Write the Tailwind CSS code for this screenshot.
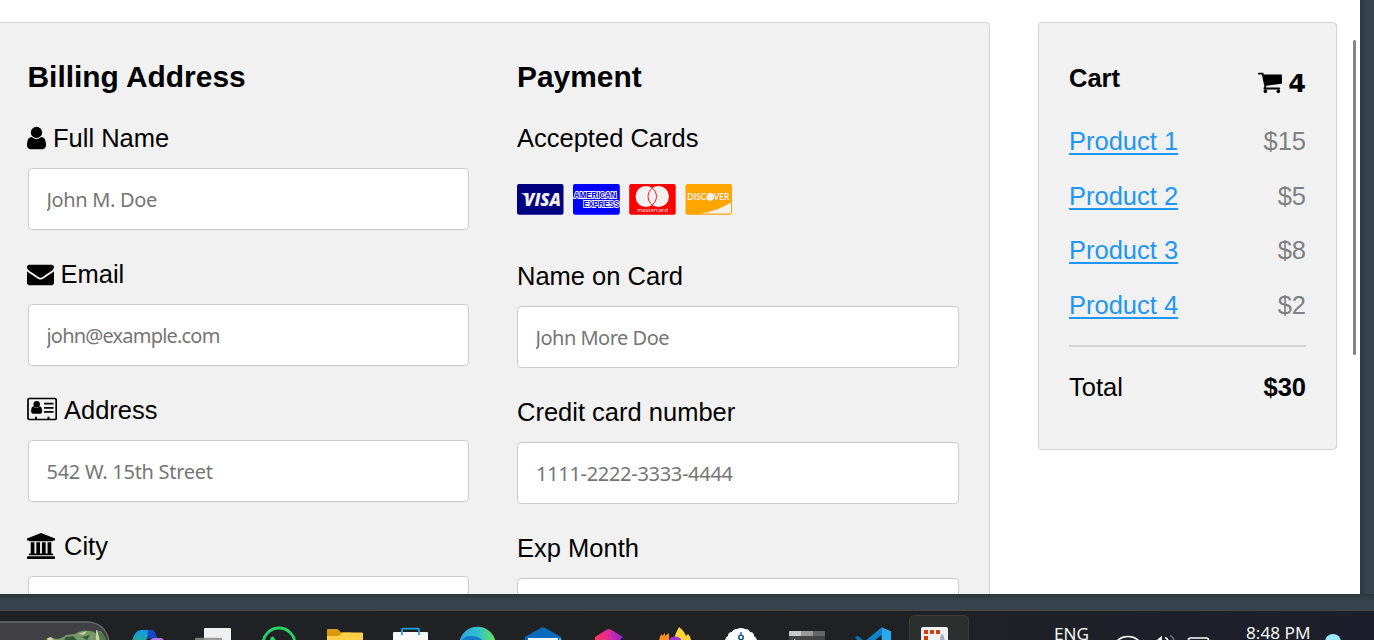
<!DOCTYPE html>
<html lang="en">
<head>
<meta charset="utf-8">
<title>Checkout</title>
<script src="https://cdn.jsdelivr.net/npm/@tailwindcss/browser@4"></script>
</head>
<body class="w-[1374px] h-[640px] overflow-hidden flex flex-col bg-[#37444d] font-['Liberation_Sans',Arial,sans-serif] text-[25.5px] leading-[29px] text-black">

<div class="flex h-[594px] w-full shrink-0">
  <!-- Browser page -->
  <main class="w-[1360px] h-[594px] overflow-hidden bg-white flex items-start pt-[22px]">
    <form class="-ml-1 w-[994px] h-[640px] shrink-0 bg-[#f1f1f1] border border-[#d3d3d3] rounded-[4px] pt-[37px] pl-[31px] pr-[30px] flex gap-12">
      <section class="w-[441px]">
        <h3 class="-ml-[0.5px] font-bold text-[29.9px] leading-[34px] mb-[30px]">Billing Address</h3>
        <label class="flex h-[29px] mb-[15px] whitespace-pre"><svg class="w-[19px] h-[26px] mt-px -ml-[1px] mr-[7px]" viewBox="256 0 1280 1792" preserveAspectRatio="none"><path d="M1536 1399q0 109-62.5 187t-150.5 78h-854q-88 0-150.5-78t-62.5-187q0-85 8.5-160.5t31.5-152 58.5-131 94-89 134.5-34.5q131 128 313 128t313-128q76 0 134.5 34.5t94 89 58.5 131 31.5 152 8.5 160.5zm-256-887q0 159-112.5 271.5t-271.5 112.5-271.5-112.5-112.5-271.5 112.5-271.5 271.5-112.5 271.5 112.5 112.5 271.5z"/></svg>Full Name</label>
        <input class="block w-full h-[62px] mb-[30px] bg-white border border-[#cccccc] rounded-[4px] px-[17.5px] font-['Noto_Sans',sans-serif] text-[20px] tracking-[-0.35px] placeholder:text-[#757575]" placeholder="John M. Doe">
        <label class="flex h-[29px] mb-[15px]"><svg class="w-[27px] h-[26px] mt-[1px] -ml-[1px] mr-[6.5px]" viewBox="0 0 1792 1792" preserveAspectRatio="none"><path d="M1792 710v794q0 66-47 113t-113 47h-1472q-66 0-113-47t-47-113v-794q44 49 101 87 362 246 497 345 57 42 92.5 65.5t94.5 48 110 24.5h2q51 0 110-24.5t94.5-48 92.5-65.5q170-123 498-345 57-39 100-87zm0-294q0 79-49 151t-122 123q-376 261-468 325-10 7-42.5 31t-54 38.500-52 32.500-57.500 27-50 9h-2q-23 0-50-9t-57.500-27-52-32.500-54-38.500-42.500-31q-91-64-262-182.500t-205-142.500q-62-42-117-115.500t-55-136.500q0-78 41.500-130t118.500-52h1472q65 0 112.500 47t47.500 113z"/></svg>Email</label>
        <input class="block w-full h-[62px] mb-[30px] bg-white border border-[#cccccc] rounded-[4px] px-[17.5px] font-['Noto_Sans',sans-serif] text-[20px] tracking-[-0.8px] placeholder:text-[#757575]" placeholder="john@example.com">
        <label class="flex h-[29px] mb-[15px]"><svg class="w-[30px] h-[24px] mt-[1px] -ml-[1px] mr-[7px]" viewBox="0 0 30 24"><rect x="1" y="1.500" width="28.200" height="21" rx="1.300" fill="none" stroke="#000" stroke-width="1.700"/><circle cx="9.700" cy="7.300" r="3.200"/><path d="M6.400 9.300q3.200 3 6.400 0 2.400.8 2.400 5 0 2.400-1.600 2.400H5.700q-1.600 0-1.600-2.400 0-4.200 2.300-5zM17 5.800h9.500v1.800H17zM17 9.900h9.500v1.800H17zM17 13.900h9.500v1.800H17zM8 19.700h2V22H8zM20.500 19.700h2V22h-2z"/></svg>Address</label>
        <input class="block w-full h-[62px] mb-[30px] bg-white border border-[#cccccc] rounded-[4px] px-[17.5px] font-['Noto_Sans',sans-serif] text-[20px] tracking-[-0.27px] placeholder:text-[#757575]" placeholder="542 W. 15th Street">
        <label class="flex h-[29px] mb-[15px]"><svg class="w-[28px] h-[26px] mt-[1px] -ml-[1px] mr-[9px]" viewBox="0 0 1920 1792" preserveAspectRatio="none"><path d="M960 0l960 384v128h-128q0 26-20.500 45t-48.500 19H197q-28 0-48.500-19T128 512H0V384zM256 640h256v768h128V640h256v768h128V640h256v768h128V640h256v768h59q28 0 48.500 19t20.500 45v64H128v-64q0-26 20.500-45t48.500-19h59zm1595 960q28 0 48.500 19t20.500 45v128H0v-128q0-26 20.500-45t48.500-19z"/></svg>City</label>
        <input class="block w-full h-[62px] bg-white border border-[#cccccc] rounded-[4px]">
      </section>
      <section class="w-[442px]">
        <h3 class="font-bold text-[29.9px] leading-[34px] mb-[30px]">Payment</h3>
        <label class="block h-[29px]">Accepted Cards</label>
        <div class="flex gap-[9px] h-[109px] pt-[31px]">
          <svg class="w-[47px] h-[32px] shrink-0" viewBox="0 0 47 32"><rect width="46.500" height="30.800" rx="2" fill="#000080"/><path d="M4 9.300h4.200q1.400.2 1.700 1.800l1.100 5q-2-4.800-7-6.800z" fill="#f1f1f1"/><text x="7" y="22" font-family="Open Sans" font-weight="800" font-style="italic" font-size="17.500" textLength="37" lengthAdjust="spacingAndGlyphs" fill="#f1f1f1">VISA</text></svg>
          <svg class="w-[47px] h-[32px] shrink-0" viewBox="0 0 47 32"><rect width="46.800" height="30.800" rx="2" fill="#0000ff"/><g font-family="Liberation Sans" font-weight="bold" font-size="8.400" fill="#0000ff" stroke="#f1f1f1" stroke-width="1.900" paint-order="stroke"><text x="1" y="13.600" textLength="42.500" lengthAdjust="spacingAndGlyphs">AMERICAN</text><text x="10.500" y="23" textLength="35.500" lengthAdjust="spacingAndGlyphs">EXPRESS</text></g></svg>
          <svg class="w-[47px] h-[32px] shrink-0" viewBox="0 0 47 32"><rect x=".2" width="46.500" height="30.800" rx="2" fill="#ff0000"/><circle cx="17" cy="12.500" r="10.500" fill="#f1f1f1"/><circle cx="29.500" cy="12.500" r="10.500" fill="#f1f1f1"/><path d="M23.250 4.100a10.500 10.500 0 0 1 0 16.800a10.500 10.500 0 0 1 0-16.800z" fill="#f1f1f1" stroke="#ff0000" stroke-width=".9"/><text x="8" y="28" font-family="Open Sans" font-size="6" textLength="31" lengthAdjust="spacingAndGlyphs" fill="#f1f1f1">mastercard</text></svg>
          <svg class="w-[48px] h-[32px] shrink-0" viewBox="0 0 48 32"><g transform="translate(.5 -.3)"><rect y=".3" width="46.500" height="30.800" rx="2" fill="#ffa500"/><path d="M45.500 18.500v11.400H14q20-3 31.500-11.400z" fill="#f1f1f1"/><g font-family="Lato" font-weight="bold" font-size="9" fill="#f1f1f1"><text x="1.800" y="16.500" textLength="19" lengthAdjust="spacingAndGlyphs">DISC</text><text x="28" y="16.500" textLength="16" lengthAdjust="spacingAndGlyphs">VER</text></g><circle cx="24.600" cy="13.200" r="3.800" fill="#f1f1f1"/></g></svg>
        </div>
        <label class="block h-[29px] mb-[15px]">Name on Card</label>
        <input class="block w-full h-[62px] mb-[30px] bg-white border border-[#cccccc] rounded-[4px] px-[17.5px] font-['Noto_Sans',sans-serif] text-[20px] tracking-[-0.5px] placeholder:text-[#757575]" placeholder="John More Doe">
        <label class="block h-[29px] mb-[15px]">Credit card number</label>
        <input class="block w-full h-[62px] mb-[30px] bg-white border border-[#cccccc] rounded-[4px] px-[18px] font-['Noto_Sans',sans-serif] text-[20px] tracking-[-0.3px] placeholder:text-[#757575]" placeholder="1111-2222-3333-4444">
        <label class="block h-[29px] mb-[15px]">Exp Month</label>
        <input class="block w-full h-[62px] bg-white border border-[#cccccc] rounded-[4px]">
      </section>
    </form>

    <aside class="ml-12 w-[299px] h-[428px] shrink-0 bg-[#f1f1f1] border border-[#d3d3d3] rounded-[4px] px-[30px] pt-[41px]">
      <h4 class="flex justify-between font-bold h-[63px]"><span>Cart</span>
        <span class="flex h-[29px] mt-[5px] font-['DejaVu_Sans',sans-serif]"><svg class="w-[24px] h-[26px] mr-[6px]" viewBox="64 0 1664 1792" preserveAspectRatio="none"><path d="M704 1536q0 52-38 90t-90 38-90-38-38-90 38-90 90-38 90 38 38 90zm896 0q0 52-38 90t-90 38-90-38-38-90 38-90 90-38 90 38 38 90zm128-1088v512q0 24-16.500 42.500t-40.500 21.500l-1044 122q13 60 13 70 0 16-24 64h920q26 0 45 19t19 45-19 45-45 19h-1024q-26 0-45-19t-19-45q0-11 8-31.500t16-36 21.500-40 15.500-29.500l-177-823h-204q-26 0-45-19t-19-45 19-45 45-19h256q16 0 28.500 6.500t19.500 15.500 13 24.500 8 26 5.500 29.500 4.500 26h1201q26 0 45 19t19 45z"/></svg>4</span>
      </h4>
      <p class="flex justify-between mb-[25.500px]"><a class="text-[#2196f3] underline decoration-2 underline-offset-[3px]">Product 1</a><span class="text-[#808080]">$15</span></p>
      <p class="flex justify-between mb-[25.500px]"><a class="text-[#2196f3] underline decoration-2 underline-offset-[3px]">Product 2</a><span class="text-[#808080]">$5</span></p>
      <p class="flex justify-between mb-[25.500px]"><a class="text-[#2196f3] underline decoration-2 underline-offset-[3px]">Product 3</a><span class="text-[#808080]">$8</span></p>
      <p class="flex justify-between mb-[25.500px]"><a class="text-[#2196f3] underline decoration-2 underline-offset-[3px]">Product 4</a><span class="text-[#808080]">$2</span></p>
      <hr class="border-0 h-[2px] bg-[#d3d3d3] mb-[26px]">
      <p class="flex justify-between">Total<b>$30</b></p>
    </aside>
    <div class="ml-4 mt-[18px] w-[3px] h-[315px] rounded-full bg-[#858585] shrink-0"></div>
  </main>
  <div class="flex-1 bg-linear-to-r from-[#2c3840] to-[#37444d] to-50%"></div>
</div>
<div class="h-[17px] shrink-0 bg-linear-to-b from-[#2a353c] to-[#37444d] to-40% border-b border-[#4a4644]"></div>

<!-- Taskbar -->
<footer class="h-[29px] shrink-0 flex bg-linear-to-r from-[#202125] via-[#212223] to-[#1c1f2b] overflow-hidden">
  <svg class="w-[114px] h-[29px] shrink-0" viewBox="0 611 114 29"><path d="M0 621.500h86q20 0 23.500 21H0z" fill="#414145"/><path d="M0 621.900h86q19 0 23 19" fill="none" stroke="#66676a" stroke-width="1.500"/><path d="M46 640q2-4 6-2l5 1q6-1 9-4l9-1q7-5 15-3 4 0 6 3l9 6z" fill="#77966a"/><path d="M47 638.500l4-1.500 3 3h-6zM78 634l9-3-3 4zM96 630l6 2-3 8h-3z" fill="#ccd0a5"/><path d="M66 637l7-1 4 4H64zM82 637l8-2-3 5z" fill="#375938"/><path d="M97 630q7 2 9 10h-6z" fill="#507b4a"/></svg>
  <svg class="w-[66px] h-[29px] shrink-0" viewBox="114 611 66 29"><defs><linearGradient id="cp" x1="0" x2="0" y1="0" y2="1"><stop stop-color="#1597e8"/><stop offset="1" stop-color="#20a9a0"/></linearGradient></defs><path d="M132 641q3-11 9-11h13q-5 1-8 11z" fill="url(#cp)"/><path d="M148 630h4q3 0 5 8h-5q-2 0-3 2-2-5-1-10z" fill="#1648c8"/><path d="M150 641q1-3 4-3h7q2 0 3 3z" fill="#b77be8"/></svg>
  <svg class="w-[66px] h-[29px] shrink-0" viewBox="180 611 66 29"><rect x="204" y="628" width="27" height="20" rx="1" fill="#f0f0f0"/><rect x="195" y="637.700" width="27" height="12" rx="1" fill="#8c8c8c" fill-opacity=".85"/></svg>
  <svg class="w-[66px] h-[29px] shrink-0" viewBox="246 611 66 29"><circle cx="279" cy="644" r="16" fill="none" stroke="#25d366" stroke-width="2.800"/><path d="M270 641q0-4 2.500-4.500 2 0 3 4.500z" fill="#25d366"/></svg>
  <svg class="w-[66px] h-[29px] shrink-0" viewBox="312 611 66 29"><path d="M327 642v-12q0-1 1-1h9q1 0 4 3.500h10v9z" fill="#dc9b0c"/><path d="M327 642v-6h11q2 0 4-3.500h20q1 0 1 1V642z" fill="#ffcf48"/></svg>
  <svg class="w-[66px] h-[29px] shrink-0" viewBox="378 611 66 29"><rect x="393" y="632" width="35" height="16" rx="1" fill="#f8f8f8"/><path d="M402 635v-5.500q0-.8.800-.8h15.400q.8 0 .8.800v5.500" fill="none" stroke="#1ba5e8" stroke-width="1.800"/></svg>
  <svg class="w-[66px] h-[29px] shrink-0" viewBox="444 611 66 29"><defs><linearGradient id="ed"><stop stop-color="#2ba4e4"/><stop offset=".5" stop-color="#30bfd4"/><stop offset="1" stop-color="#68e450"/></linearGradient></defs><circle cx="477.500" cy="645" r="18.300" fill="url(#ed)"/><path d="M461 641q3-5 10-5 8 0 12 5z" fill="#167bc8"/></svg>
  <svg class="w-[66px] h-[29px] shrink-0" viewBox="510 611 66 29"><path d="M525 641v-4l16-9.300q2-1 4 0l16 9.300v4z" fill="#096bbb"/><path d="M528 638h30v3h-30z" fill="#f4f8ff"/><path d="M559 638h2v3h-2z" fill="#39c6f2"/></svg>
  <svg class="w-[66px] h-[29px] shrink-0" viewBox="576 611 66 29"><defs><linearGradient id="hx"><stop stop-color="#ff3858"/><stop offset=".45" stop-color="#e42c93"/><stop offset="1" stop-color="#9120e0"/></linearGradient></defs><path d="M595 641v-4l12-7.600q1.800-1 3.600 0L623 637l-4 4z" fill="url(#hx)"/><path d="M619 641l4-3v3z" fill="#2d0b44"/></svg>
  <svg class="w-[66px] h-[29px] shrink-0" viewBox="642 611 66 29"><path d="M659 641q0-5 3-7v2l3-3v3l4-3v8z" fill="#ff901e"/><path d="M673 641q3-9 6-14 5 4 6 7l1 2 2-2q3 3 3 7z" fill="#ffd53a"/><path d="M669 641q0-4 6-4.500 5 0 7 4.500z" fill="#a035dc"/></svg>
  <svg class="w-[66px] h-[29px] shrink-0" viewBox="708 611 66 29"><path d="M725 641q0-4 3-5 0-4 4-4 1-3 5-3 4-2 8 0 4 0 5 3 4 0 4 4 3 2 3 5z" fill="#fff"/><circle cx="741" cy="637.500" r="2.200" fill="#fff" stroke="#174d70" stroke-width="1.500"/><path d="M740.200 632h1.600v3.500h-1.600z" fill="#2a6dc0"/></svg>
  <svg class="w-[66px] h-[29px] shrink-0" viewBox="774 611 66 29"><rect x="789" y="631" width="36" height="14" rx="1" fill="#444"/><path d="M789 636v-4q0-1 1-1h11v5z" fill="#c9c9c9"/><path d="M801 631h12v5h-12z" fill="#999"/><path d="M813 631h11q1 0 1 1v4h-12z" fill="#666"/><path d="M794 638.500l2 2h-2z" fill="#ddd"/></svg>
  <svg class="w-[66px] h-[29px] shrink-0" viewBox="840 611 66 29"><path d="M855 637.500l2.500-1.800 7 5.300H858z" fill="#0877b9"/><path d="M865 641l16.500-13.500V641z" fill="#1184cc"/><path d="M881.500 627.300l9.500 4V641h-9.500z" fill="#29a9f2"/><path d="M874 641l7.500-6v6z" fill="#202123"/></svg>
  <svg class="w-[66px] h-[29px] shrink-0" viewBox="906 611 66 29"><rect x="909.500" y="615.500" width="59" height="40" rx="5" fill="#2d2f2f" stroke="#3b3c3c"/><rect x="921" y="627" width="27" height="20" rx="2" fill="#eef1f4"/><path d="M924 630h4v4h-4zM930 630h4v4h-4zM936 630h4v4h-4zM924 636h4v4h-4z" fill="#d83b01"/><path d="M940 641q0-6 2-7 3 2 2.500 7z" fill="#a5adb5"/></svg>
  <div class="flex ml-[81px] pt-[12px]">
    <svg class="w-[60px] h-[17px] shrink-0" viewBox="0 0 60 17"><text x="1" y="17" font-family="Open Sans" font-size="17" textLength="35" lengthAdjust="spacingAndGlyphs" fill="#fff">ENG</text></svg>
    <svg class="w-[133px] h-[17px] shrink-0" viewBox="1113 623 133 17" fill="none" stroke="#fff" stroke-width="1.700"><path d="M1117 641q4-4.500 11-4.500t11 4.500M1157 641l4-3.500v4M1165 637.500q3 1 3 4M1188.500 642v-2q0-2 2-2h16q2 0 2 2v2"/><path d="M1170 635.500q4 2 4 6" stroke="#686868"/></svg>
    <svg class="w-[66px] h-[17px] shrink-0" viewBox="0 0 66 17"><text x="0" y="15.500" font-family="Open Sans" font-size="17" textLength="64.500" lengthAdjust="spacingAndGlyphs" fill="#fff">8:48 PM</text></svg>
    <div class="ml-[13px] mt-[11px] size-4 rounded-full bg-[#99ebff] shrink-0"></div>
  </div>
</footer>
</body>
</html>
